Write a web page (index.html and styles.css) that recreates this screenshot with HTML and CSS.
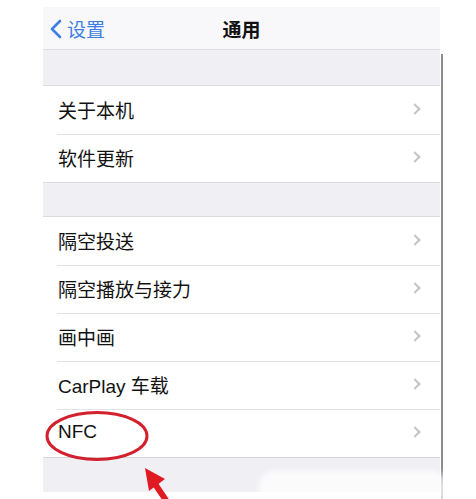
FILE: index.html
```html
<!DOCTYPE html>
<html lang="zh-CN">
<head>
<meta charset="utf-8">
<link rel="stylesheet" href="styles.css">
</head>
<body>
<div class="page">
  <div class="screen">
    <header class="nav">
      <div class="back">
        <svg class="back-chev" width="12" height="20" viewBox="0 0 12 20"><path d="M10 2 L2 10 L10 18" fill="none" stroke="#3d7fe3" stroke-width="2.6" stroke-linecap="round" stroke-linejoin="round"/></svg>
        <span>设置</span>
      </div>
      <div class="title">通用</div>
    </header>
    <div class="gap"></div>
    <ul class="group">
      <li class="row"><span>关于本机</span><i class="chev"></i></li>
      <li class="row"><span>软件更新</span><i class="chev"></i></li>
    </ul>
    <div class="gap gap2"></div>
    <ul class="group">
      <li class="row"><span>隔空投送</span><i class="chev"></i></li>
      <li class="row"><span>隔空播放与接力</span><i class="chev"></i></li>
      <li class="row"><span>画中画</span><i class="chev"></i></li>
      <li class="row"><span>CarPlay 车载</span><i class="chev"></i></li>
      <li class="row nfc"><span>NFC</span><i class="chev"></i></li>
    </ul>
    <div class="gap gap3"></div>
    <div class="scrollbar"></div>
  </div>
  <svg class="annot" width="476" height="499" viewBox="0 0 476 499">
    <ellipse cx="97" cy="436" rx="50" ry="23.5" fill="none" stroke="#d2202c" stroke-width="3"/>
    <path d="M174 512 L155 484" stroke="#e01a22" stroke-width="6" fill="none"/>
    <path d="M145 468 L165 479 L149 491 Z" fill="#e01a22"/>
  </svg>
  <div class="watermark"></div>
</div>
</body>
</html>
```
FILE: styles.css
```css
* { box-sizing: border-box; }
html, body { margin: 0; padding: 0; background: #fff; }
body {
  width: 476px;
  height: 499px;
  overflow: hidden;
  font-family: "Liberation Sans", "Noto Sans CJK SC", sans-serif;
  color: #121212;
}
.page { position: relative; width: 476px; height: 499px; padding-top: 7px; }
.screen {
  position: relative;
  margin-left: 43px;
  width: 397px;
}
.nav {
  position: relative;
  height: 43px;
  background: #f8f8fa;
  border-bottom: 1px solid #dedee2;
  display: flex;
  align-items: center;
  justify-content: center;
}
.back {
  position: absolute;
  left: 7px;
  top: 0;
  height: 42px;
  display: flex;
  align-items: center;
  gap: 5px;
  color: #3d7fe3;
  font-size: 19px;
  font-family: "Noto Sans CJK SC", sans-serif;
}
.back-chev { margin-top: 1px; }
.title {
  font-family: "Noto Sans CJK SC", sans-serif;
  font-weight: 600;
  font-size: 19px;
  color: #111;
}
.gap {
  height: 36px;
  background: #efeff4;
  border-bottom: 1px solid #dcdce0;
}
.gap2 { height: 35px; border-top: 1px solid #dcdce0; }
.gap3 { height: 35px; border-top: 1px solid #d6d6da; border-bottom: none; }
.group { list-style: none; margin: 0; padding: 0; background: #fff; }
.row {
  height: 48px;
  display: flex;
  align-items: center;
  justify-content: space-between;
  padding: 0 19px 2px 15px;
  font-size: 19px;
  position: relative;
}
.row + .row::before {
  content: "";
  position: absolute;
  left: 14px;
  right: 0;
  top: 0;
  height: 1px;
  background: #e3e3e6;
}
.chev {
  width: 8px;
  height: 8px;
  border-top: 2px solid #c5c5c9;
  border-right: 2px solid #c5c5c9;
  transform: rotate(45deg);
  margin-right: 2px;
}
.scrollbar {
  position: absolute;
  right: -3px;
  top: 47px;
  width: 2.5px;
  height: 460px;
  background: #8c8c8f;
}
.annot { position: absolute; left: 0; top: 0; }
.watermark {
  position: absolute;
  left: 258px;
  top: 470px;
  width: 190px;
  height: 40px;
  border-radius: 18px;
  background: rgba(255,255,255,0.75);
  filter: blur(3px);
}
```
